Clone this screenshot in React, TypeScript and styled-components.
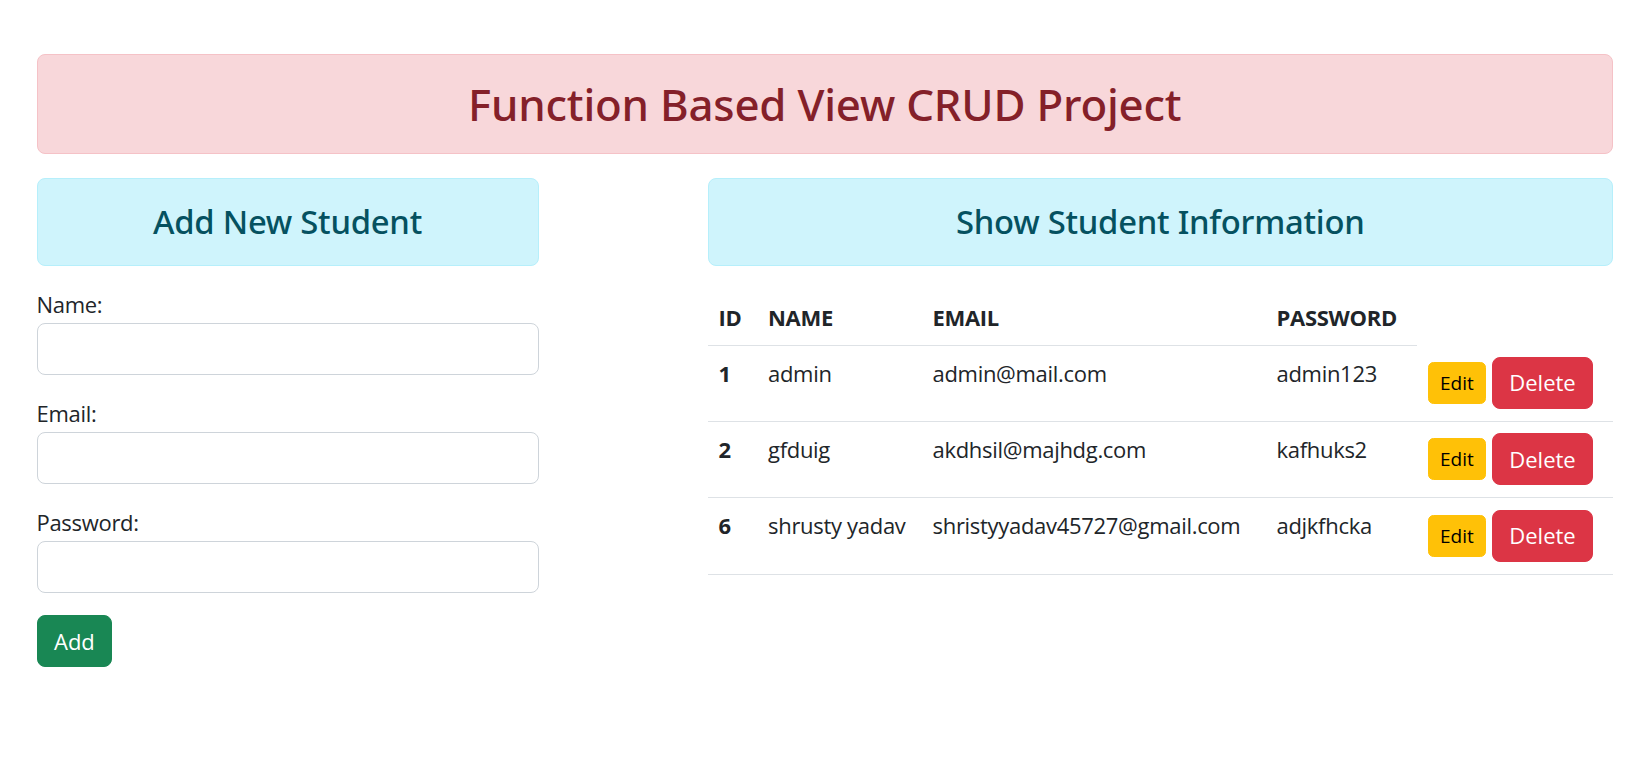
import React from 'react'
import styled, { createGlobalStyle } from 'styled-components'

const GlobalStyle = createGlobalStyle`
  body {
    margin: 0;
    background: #fff;
    color: #212529;
    font-family: 'Open Sans', 'Noto Sans', sans-serif;
    font-size: 22px;
    line-height: 1.5;
    letter-spacing: -0.3px;
  }
  * {
    box-sizing: border-box;
  }
`

const Page = styled.div`
  padding: 54px 21px 40px 36.5px;
`

const TitleAlert = styled.div`
  height: 100px;
  display: flex;
  align-items: center;
  justify-content: center;
  background: #f8d7da;
  border: 1px solid #f5c2c7;
  border-radius: 8px;
  color: #842029;
  h1 {
    margin: 0;
    font-family: 'Noto Sans', 'Open Sans', sans-serif;
    font-size: 43.8px;
    font-weight: 500;
    line-height: 1.2;
    letter-spacing: -0.2px;
  }
`

const Columns = styled.div`
  margin-top: 24px;
  display: grid;
  grid-template-columns: 502px 1fr;
  column-gap: 169px;
  align-items: start;
`

const InfoBox = styled.div`
  height: 88px;
  display: flex;
  align-items: center;
  justify-content: center;
  background: #cff4fc;
  border: 1px solid #b6effb;
  border-radius: 8px;
  color: #055160;
  h3 {
    margin: 0;
    font-family: 'Noto Sans', 'Open Sans', sans-serif;
    font-size: 32.8px;
    font-weight: 500;
    line-height: 1.2;
    letter-spacing: -0.25px;
  }
`

const Form = styled.form`
  margin-top: 22px;
`

const Field = styled.div`
  margin-bottom: 22px;
  label {
    display: block;
    line-height: 33px;
    margin-bottom: 2px;
  }
`

const Input = styled.input`
  display: block;
  width: 100%;
  height: 52px;
  padding: 0 16.5px;
  font: inherit;
  border: 1px solid #ced4da;
  border-radius: 8px;
  background: #fff;
  outline: none;
`

const Button = styled.button<{ $variant: 'success' | 'danger' | 'warning'; $small?: boolean }>`
  display: inline-flex;
  align-items: center;
  justify-content: center;
  height: ${p => (p.$small ? '42px' : '52px')};
  padding: ${p => (p.$small ? '0 11px' : '0 16.5px')};
  font-family: inherit;
  font-size: ${p => (p.$small ? '19px' : '22px')};
  letter-spacing: 0;
  line-height: 1.5;
  border-radius: ${p => (p.$small ? '5.5px' : '8px')};
  border: 1px solid
    ${p => (p.$variant === 'success' ? '#198754' : p.$variant === 'danger' ? '#dc3545' : '#ffc107')};
  background: ${p =>
    p.$variant === 'success' ? '#198754' : p.$variant === 'danger' ? '#dc3545' : '#ffc107'};
  color: ${p => (p.$variant === 'warning' ? '#000' : '#fff')};
  cursor: pointer;
`

const Table = styled.table`
  margin-top: 23.5px;
  width: 100%;
  border-collapse: collapse;
  th,
  td {
    padding: 11px;
    text-align: left;
    line-height: 33px;
    vertical-align: top;
  }
  thead th {
    border-bottom: 1px solid #dee2e6;
    font-weight: 700;
  }
  tbody th {
    font-weight: 700;
  }
  tbody tr > * {
    border-bottom: 1px solid #dee2e6;
  }
`

const Actions = styled.div`
  display: flex;
  align-items: center;
  gap: 6px;
  padding: 0.75px 0;
`

const students = [
  { id: 1, name: 'admin', email: 'admin@mail.com', password: 'admin123' },
  { id: 2, name: 'gfduig', email: 'akdhsil@majhdg.com', password: 'kafhuks2' },
  { id: 6, name: 'shrusty yadav', email: 'shristyyadav45727@gmail.com', password: 'adjkfhcka' }
]

export default function App() {
  return (
    <Page>
      <GlobalStyle />
      <TitleAlert>
        <h1>Function Based View CRUD Project</h1>
      </TitleAlert>
      <Columns>
        <div>
          <InfoBox>
            <h3>Add New Student</h3>
          </InfoBox>
          <Form onSubmit={e => e.preventDefault()}>
            <Field>
              <label htmlFor="name">Name:</label>
              <Input id="name" type="text" />
            </Field>
            <Field>
              <label htmlFor="email">Email:</label>
              <Input id="email" type="email" />
            </Field>
            <Field>
              <label htmlFor="password">Password:</label>
              <Input id="password" type="password" />
            </Field>
            <Button type="submit" $variant="success">
              Add
            </Button>
          </Form>
        </div>
        <div>
          <InfoBox>
            <h3>Show Student Information</h3>
          </InfoBox>
          <Table>
            <colgroup>
              <col style={{ width: 49.5 }} />
              <col style={{ width: 164.5 }} />
              <col style={{ width: 344 }} />
              <col style={{ width: 151.5 }} />
              <col />
            </colgroup>
            <thead>
              <tr>
                <th>ID</th>
                <th>NAME</th>
                <th>EMAIL</th>
                <th>PASSWORD</th>
              </tr>
            </thead>
            <tbody>
              {students.map(s => (
                <tr key={s.id}>
                  <th>{s.id}</th>
                  <td>{s.name}</td>
                  <td>{s.email}</td>
                  <td>{s.password}</td>
                  <td>
                    <Actions>
                      <Button $variant="warning" $small>
                        Edit
                      </Button>
                      <Button $variant="danger">Delete</Button>
                    </Actions>
                  </td>
                </tr>
              ))}
            </tbody>
          </Table>
        </div>
      </Columns>
    </Page>
  )
}
